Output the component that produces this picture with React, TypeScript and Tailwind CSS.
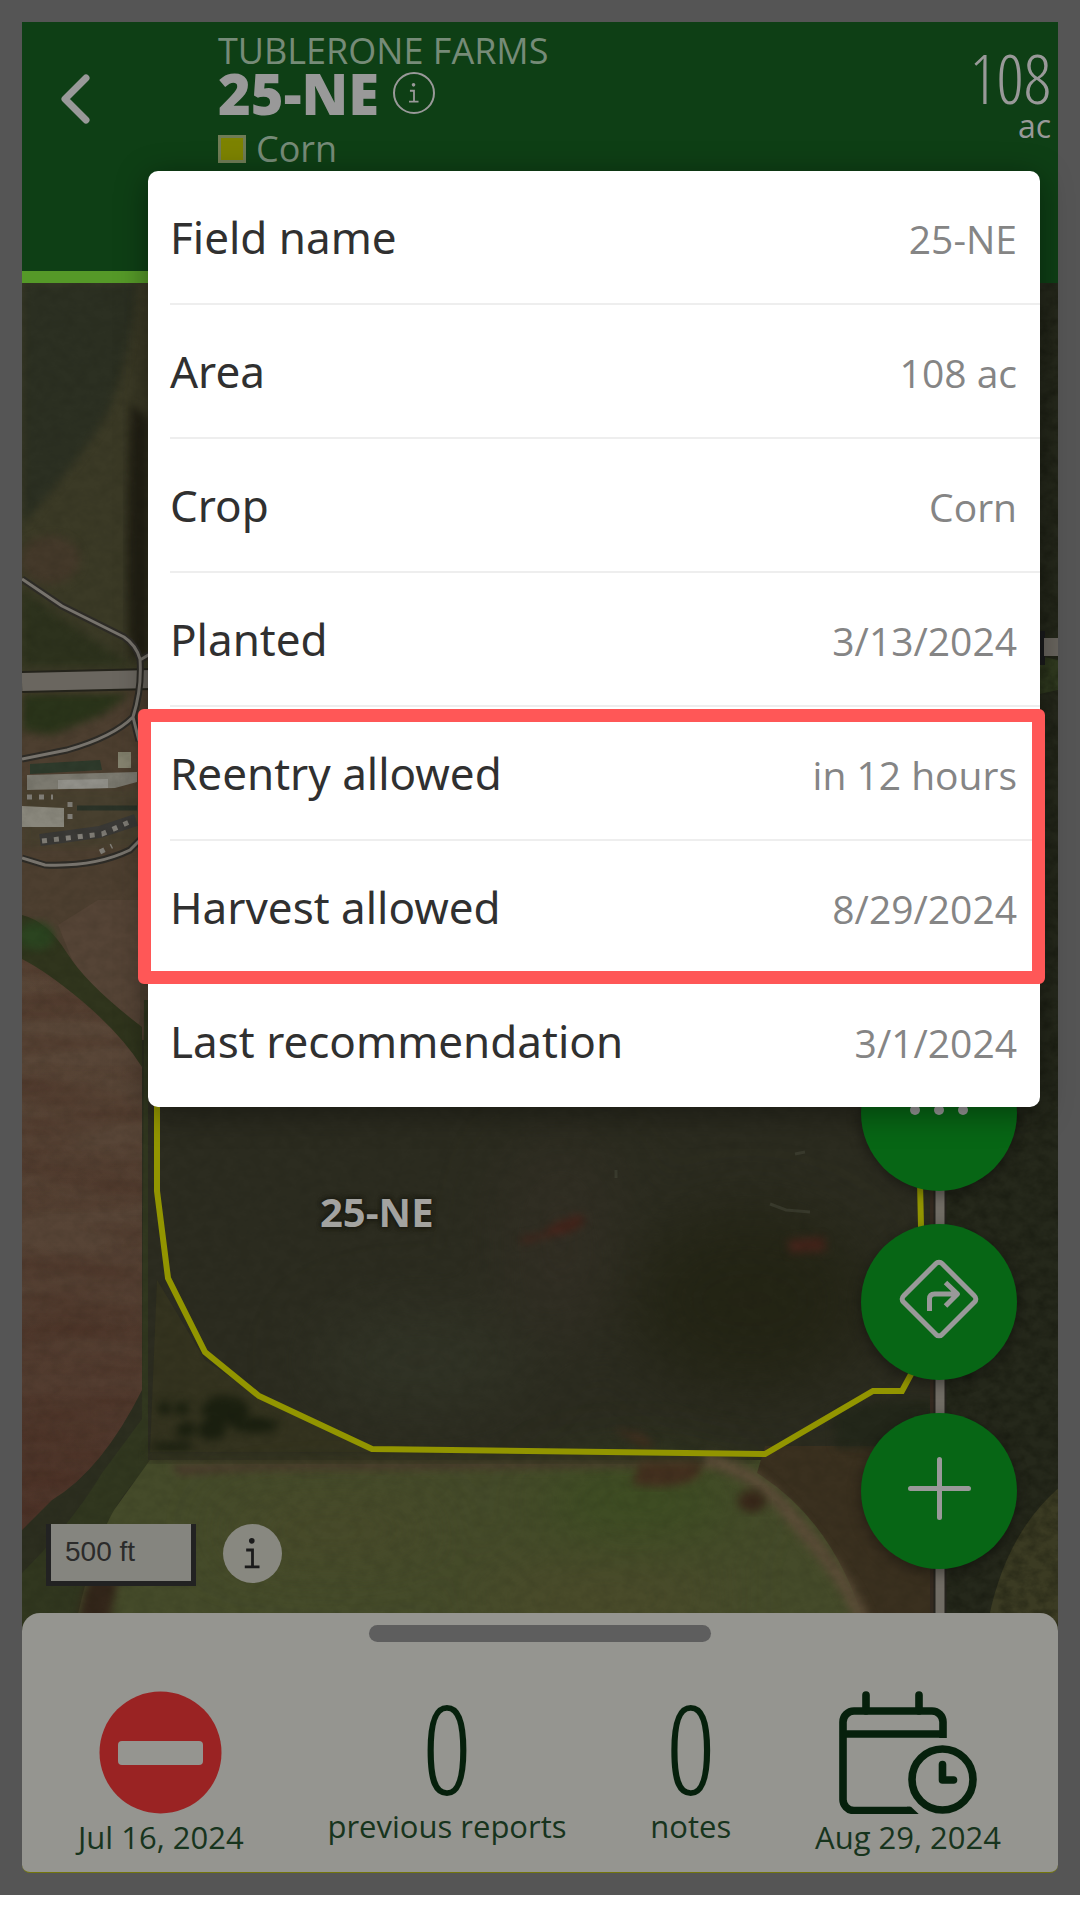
const details = [
  { label: "Field name", value: "25-NE" },
  { label: "Area", value: "108 ac" },
  { label: "Crop", value: "Corn" },
  { label: "Planted", value: "3/13/2024" },
  { label: "Reentry allowed", value: "in 12 hours" },
  { label: "Harvest allowed", value: "8/29/2024" },
  { label: "Last recommendation", value: "3/1/2024" },
];

const narrow =
  "font-['Open_Sans_Condensed_Light','Liberation_Sans_Narrow','Open_Sans',sans-serif] font-light";

const westField = "M22 945l60 30 45 45q16 20 15 50v320q-40 80-90 110l-30 30z";

const tracks =
  "M22 579l40 27 62 31q12 8 16 22 2 30-7 58-20 20-66 33l-45 9M140 660l10-6M133 717l6 24M22 858l23 7q50 2 85-15l12-12";

function InfoGlyph({ className }: { className: string }) {
  return (
    <svg viewBox="0 0 42 42" className={className} fill="none" aria-hidden="true">
      <circle cx="20.500" cy="12" r="2" fill="currentColor" />
      <path d="M16.500 18.500h4.500v12M15.500 30.500h10.500" stroke="currentColor" strokeWidth="2" />
    </svg>
  );
}

function CalendarClock() {
  return (
    <svg viewBox="0 0 138 123" className="h-[123px] w-[138px]" fill="none" aria-hidden="true">
      <g stroke="#06200c" strokeWidth="7.600">
        <path d="M27 4v16M80 4v16" strokeLinecap="round" />
        <path d="M104 47V31a11 11 0 0 0-11-11H15A11 11 0 0 0 4 31v77a11 11 0 0 0 11 11.500h56M4 43h103" />
        <circle cx="103.500" cy="88.500" r="30.500" />
        <path d="M103.500 73.500v15.500h11" strokeLinecap="round" strokeLinejoin="round" />
      </g>
      <path d="M68 115.700h4l8 7.600H68z" fill="#06200c" />
    </svg>
  );
}

function FieldMap() {
  return (
    <svg
      viewBox="22 283 1036 1350"
      preserveAspectRatio="none"
      className="absolute inset-0 h-full w-full"
      aria-hidden="true"
    >
      <defs>
        <filter id="soft" x="-20%" y="-20%" width="140%" height="140%" colorInterpolationFilters="sRGB">
          <feGaussianBlur stdDeviation="4" />
        </filter>
        <filter id="wide" x="-60%" y="-100%" width="220%" height="300%" colorInterpolationFilters="sRGB">
          <feGaussianBlur stdDeviation="32" />
        </filter>
        <filter id="grain" x="0" y="0" width="100%" height="100%" colorInterpolationFilters="sRGB">
          <feTurbulence type="fractalNoise" baseFrequency="0.08 0.1" numOctaves="4" seed="7" />
          <feColorMatrix values="0 0 0 0 0.04  0 0 0 0 0.05  0 0 0 0 0.02  1.6 0 0 0 -0.55" />
        </filter>
        <filter id="furrow" x="0" y="0" width="100%" height="100%" colorInterpolationFilters="sRGB">
          <feTurbulence type="fractalNoise" baseFrequency="0.006 0.04" numOctaves="3" seed="3" />
          <feColorMatrix values="0 0 0 0 0.24  0 0 0 0 0.13  0 0 0 0 0.09  1.8 0 0 0 -0.6" />
        </filter>
        <linearGradient id="soil" x1="0" y1="0" x2="0" y2="1">
          <stop offset="0" stopColor="#5a4738" />
          <stop offset="0.5" stopColor="#574436" />
          <stop offset="1" stopColor="#4f352a" />
        </linearGradient>
        <clipPath id="west">
          <path d={westField} />
        </clipPath>
      </defs>

      <rect x="22" y="283" width="1036" height="1350" fill="#2c2e1f" />

      {/* north west field and tree line */}
      <rect x="22" y="283" width="130" height="400" fill="#3b3a26" />
      <path d="M22 283h115q-4 70-30 130-25 45-85 112z" fill="#2c3022" filter="url(#soft)" />
      <ellipse cx="50" cy="560" rx="30" ry="24" fill="#44392a" filter="url(#soft)" />
      <path d="M22 590l50 36 60 40H22z" fill="#2d321d" filter="url(#soft)" />
      <path d="M131 405l12 8 5 8v236h-18q-6-90 1-252z" fill="#232115" filter="url(#soft)" />

      {/* farm yard */}
      <path d="M22 690h130v350H22z" fill="#4d3f30" />
      <path d="M22 693h110l-30 22-50 20-30-4z" fill="#2a341a" filter="url(#soft)" />
      <path d="M22 788h120v60H22z" fill="#48402f" filter="url(#soft)" />
      <path d="M30 764l70-4 2 10-72 4z" fill="#2e3a2b" />
      <path d="M27 775l110-3v10l-22 6-88 2z" fill="#7c7a70" />
      <path d="M58 780l50-1v9l-50 1z" fill="#92918a" />
      <path d="M22 806l42 2v19H22z" fill="#89877c" />
      <path d="M118 752h13v16h-13z" fill="#85836f" />
      <path d="M77 808h60" stroke="#2b3328" strokeWidth="5" />
      <path d="M40 840l60-8 36-12" stroke="#3a3936" strokeWidth="12" fill="none" />
      <path
        d="M42 841l60-7 32-14M27 797h26M100 852l12-6M70 802v24"
        stroke="#827f78"
        strokeWidth="5"
        strokeDasharray="5 7"
        fill="none"
      />

      {/* ploughed field on the west side */}
      <path d={westField} fill="url(#soil)" />
      <g clipPath="url(#west)">
        <rect x="22" y="930" width="130" height="620" filter="url(#furrow)" opacity=".4" />
      </g>
      <path d="M58 925l40-25h42v118q0 12-14 10-20-4-44-44z" fill="#554436" />
      <path d="M22 915q25 6 45 38t75 74v40q-20-32-60-66-36-30-60-42z" fill="#30351d" />
      <ellipse cx="36" cy="936" rx="18" ry="14" fill="#2b4420" filter="url(#soft)" />
      <path d="M144 1000h12v460q-24 20-42 50l-34 123H22v-60q50-50 80-100l40-54z" fill="#31371f" />

      {/* selected field */}
      <path d="M148 1090h788v370H148z" fill="#2c2c20" />
      <g filter="url(#wide)" opacity=".7">
        <ellipse cx="420" cy="1360" rx="110" ry="50" fill="#343729" />
        <ellipse cx="560" cy="1240" rx="60" ry="100" fill="#343026" />
        <ellipse cx="750" cy="1300" rx="120" ry="90" fill="#212211" />
      </g>
      <path d="M157 1280l48 80 60 40 110 52H150z" fill="#34331f" />
      <g fill="#1b2010" filter="url(#soft)">
        <ellipse cx="225" cy="1410" rx="24" ry="14" />
        <ellipse cx="255" cy="1425" rx="24" ry="8" />
        <ellipse cx="212" cy="1430" rx="14" ry="10" />
        <ellipse cx="164" cy="1408" rx="7" ry="7" />
        <ellipse cx="182" cy="1408" rx="8" ry="7" />
        <ellipse cx="186" cy="1430" rx="10" ry="8" />
        <ellipse cx="172" cy="1447" rx="22" ry="5" />
      </g>
      <path
        d="M520 1238l22-4 12-10 26-10 6 8-16 10-28 6-20 6zM788 1240l36-3 2 14-36 2z"
        fill="#45241b"
        filter="url(#soft)"
      />
      <path d="M612 1428l30 6 14 12-12 2z" fill="#402a1f" filter="url(#soft)" />
      <path d="M795 1154l10-2M616 1170v8M770 1204l16 6 24 2" stroke="#4a4c3e" strokeWidth="3" fill="none" opacity=".5" />

      {/* southern pivot */}
      <path d="M150 1460h790v173H74q16-80 40-123z" fill="#454b2a" />
      <g filter="url(#wide)" opacity=".8">
        <ellipse cx="640" cy="1500" rx="100" ry="30" fill="#384e1d" />
        <ellipse cx="330" cy="1530" rx="110" ry="20" fill="#4c4a2a" />
        <ellipse cx="600" cy="1600" rx="130" ry="16" fill="#544c2c" />
      </g>
      <path d="M170 1464q160-6 540-6v8q-280 4-380 4t-150 6z" fill="#493c2c" filter="url(#soft)" />
      <path d="M148 1452h520l90 4-4 6H148z" fill="#32331f" filter="url(#soft)" />
      <path d="M765 1446h172v187h-70q-30-110-110-160z" fill="#3a301f" />
      <path
        d="M705 1460q52 8 96 68 54 60 66 107"
        stroke="#5a4c37"
        strokeWidth="14"
        fill="none"
        filter="url(#soft)"
      />
      <path d="M640 1462h60q6 16-18 22t-50 0z" fill="#43301f" filter="url(#soft)" />
      <ellipse cx="752" cy="1501" rx="14" ry="11" fill="#38281a" filter="url(#soft)" />
      <path d="M78 1633q0-40 20-66h24q-10 36-14 66z" fill="#33261a" filter="url(#soft)" />

      {/* tree cover and county road on the east side */}
      <path d="M834 1410l60-10h42v46l-100 2z" fill="#23271a" filter="url(#soft)" />
      <rect x="945" y="283" width="113" height="1350" fill="#25281b" />
      <path d="M1062 1485q-60 50-76 148h76z" fill="#3b3b23" />
      <path d="M1040 656l18 4v30l-18 4z" fill="#303a1f" />
      <rect x="22" y="283" width="923" height="1350" filter="url(#grain)" opacity=".1" />
      <rect x="945" y="283" width="113" height="1350" filter="url(#grain)" opacity=".4" />
      <path d="M1036 648h9" stroke="#1a1b1c" strokeWidth="34" />
      <path d="M1044 647h16" stroke="#69655e" strokeWidth="18" />
      <path d="M933 1107v526" stroke="#33291f" strokeWidth="6" />
      <path d="M940 1107v526" stroke="#25231d" strokeWidth="13" />
      <path d="M940 1107v526" stroke="#706c64" strokeWidth="9" />

      {/* roads around the farm yard */}
      <path d="M22 682l130-3" stroke="#24231b" strokeWidth="22" />
      <path d="M22 682l130-3" stroke="#6a665f" strokeWidth="18" />
      <path d={tracks} fill="none" stroke="#2d2b26" strokeWidth="7" strokeLinejoin="round" />
      <path d={tracks} fill="none" stroke="#77736c" strokeWidth="3" strokeLinejoin="round" />

      {/* field boundary */}
      <path
        d="M157 1090v101l11 87 37 74 54 44 113 53 393 5 108-63h29l13-24 6-140-3-137"
        fill="none"
        stroke="#929500"
        strokeWidth="6"
      />
    </svg>
  );
}

export default function App() {
  return (
    <div className="bg-white pb-[25px] font-['Open_Sans',sans-serif]">
      <div className="bg-[#555] p-[22px]">
        <div className="relative flex flex-col">
          <header className="flex h-[261px] flex-col bg-[#0e3f15] text-[#999]">
            <div className="flex flex-1 items-start">
              <button type="button" aria-label="Back" className="w-[196px] pt-[52px] pl-[37px]">
                <svg viewBox="0 0 32 50" className="h-[50px] w-8" fill="none">
                  <path
                    d="M27 4L6 25l21 21"
                    stroke="currentColor"
                    strokeWidth="7"
                    strokeLinecap="round"
                    strokeLinejoin="round"
                  />
                </svg>
              </button>
              <div className="flex-1 pt-[7px] leading-[44px]">
                <p className="text-[36px] text-[#768b78]">TUBLERONE FARMS</p>
                <div className="flex h-10 items-center gap-[14px]">
                  <h1 className="text-[56px] font-extrabold">25-NE</h1>
                  <button
                    type="button"
                    aria-label="Field details"
                    className="size-[42px] rounded-full border-2 border-[#999]"
                  >
                    <InfoGlyph className="size-full" />
                  </button>
                </div>
                <div className="mt-[14px] flex items-center gap-[10px]">
                  <span className="size-7 border-3 border-[#6f7c55] bg-[#7d8300]" />
                  <p className="text-[36px] text-[#768b78]">Corn</p>
                </div>
              </div>
              <div className="pt-6 pr-[7px] text-right">
                <p className={`text-[68px] leading-[64px] ${narrow}`}>108</p>
                <p className="text-[32px] leading-8 font-medium">ac</p>
              </div>
            </div>
            <div className="h-3 w-1/2 bg-[#559928]" />
          </header>

          <section className="relative flex h-[1350px] items-end justify-between pr-[41px] pb-[64px] pl-6">
            <FieldMap />
            <p className="absolute top-[901px] left-[298px] text-[40px] leading-[56px] font-bold text-[#a3a3a0] [text-shadow:0_0_4px_#1b1b12,0_0_4px_#1b1b12,0_0_6px_#1b1b12]">
              25-NE
            </p>
            <div className="relative -mb-[17px] flex items-start gap-[27px]">
              <p className="h-[62px] w-[150px] border-5 border-t-0 border-[#222] bg-[#85857f] pl-[14px] font-['Liberation_Sans',sans-serif] text-[28px] leading-[56px] text-[#2b2b2b]">
                500 ft
              </p>
              <button
                type="button"
                aria-label="Map information"
                className="size-[59px] rounded-full bg-[#888880] text-[#1b1b1b]"
              >
                <InfoGlyph className="size-full" />
              </button>
            </div>
            <div className="relative flex flex-col gap-[33px] text-[#999]">
              <button
                type="button"
                aria-label="More actions"
                className="size-[156px] rounded-full bg-[#076615] shadow-[0_4px_14px_rgba(0,0,0,0.4)]"
              >
                <svg viewBox="0 0 156 156" fill="currentColor">
                  <circle cx="54" cy="75" r="5" />
                  <circle cx="78" cy="75" r="5" />
                  <circle cx="102" cy="75" r="5" />
                </svg>
              </button>
              <button
                type="button"
                aria-label="Directions"
                className="size-[156px] rounded-full bg-[#076615] shadow-[0_4px_14px_rgba(0,0,0,0.4)]"
              >
                <svg
                  viewBox="0 0 156 156"
                  fill="none"
                  stroke="currentColor"
                  strokeWidth="5"
                  strokeLinejoin="round"
                >
                  <path d="M75 39.500a4 4 0 0 1 6 0L113.500 72a4 4 0 0 1 0 6L81 110.500a4 4 0 0 1-6 0L42.500 78a4 4 0 0 1 0-6z" />
                  <path d="M68.500 87V75q0-5 5-5H96M84.500 58.500L96.500 70 84.500 82" />
                </svg>
              </button>
              <button
                type="button"
                aria-label="Add"
                className="size-[156px] rounded-full bg-[#076615] shadow-[0_4px_14px_rgba(0,0,0,0.4)]"
              >
                <svg viewBox="0 0 156 156" stroke="currentColor" strokeWidth="5" strokeLinecap="round">
                  <path d="M78.500 46.500v58M49.500 75.500h58" />
                </svg>
              </button>
            </div>
          </section>

          <section className="relative -mt-5 flex h-[260px] flex-col rounded-t-[18px] rounded-b-lg border-b border-[#73760c] bg-[#959590] text-[#17341d]">
            <div className="mx-auto mt-3 h-[17px] w-[342px] rounded-full bg-[#5e5e5e]" />
            <div className="mt-[49px] flex items-center justify-between pr-[57px] pl-14 text-[31px] leading-[46px]">
              <div className="flex flex-col items-center">
                <svg viewBox="0 0 123 123" className="size-[123px]" aria-hidden="true">
                  <circle cx="61.500" cy="61.500" r="61" fill="#9a2323" />
                  <rect x="19" y="50" width="85" height="24" rx="4" fill="#959590" />
                </svg>
                <p>Jul 16, 2024</p>
              </div>
              <div className="text-center">
                <p className={`pb-3 text-[124px] leading-[88px] text-[#06200c] ${narrow}`}>0</p>
                <p>previous reports</p>
              </div>
              <div className="text-center">
                <p className={`pb-3 text-[124px] leading-[88px] text-[#06200c] ${narrow}`}>0</p>
                <p>notes</p>
              </div>
              <div className="flex flex-col items-center">
                <CalendarClock />
                <p>Aug 29, 2024</p>
              </div>
            </div>
          </section>

          <div className="absolute top-[149px] right-[18px] left-[126px] rounded-[10px] bg-white pl-[22px] shadow-[0_6px_32px_rgba(0,0,0,0.4)]">
            <dl>
              {details.map(({ label, value }) => (
                <div
                  key={label}
                  className="flex items-baseline justify-between border-b-2 border-[#eee] pt-9 pr-[23px] pb-[34px] leading-[60px] last:border-b-0"
                >
                  <dt className="font-['Noto_Sans',sans-serif] text-[44px] text-[#303030]">{label}</dt>
                  <dd className="text-[39px] text-[#858585]">{value}</dd>
                </div>
              ))}
            </dl>
            <div className="absolute top-[538px] right-[-5px] left-[-10px] h-[275px] rounded-md border-13 border-[#ff5757]" />
          </div>
        </div>
      </div>
    </div>
  );
}
